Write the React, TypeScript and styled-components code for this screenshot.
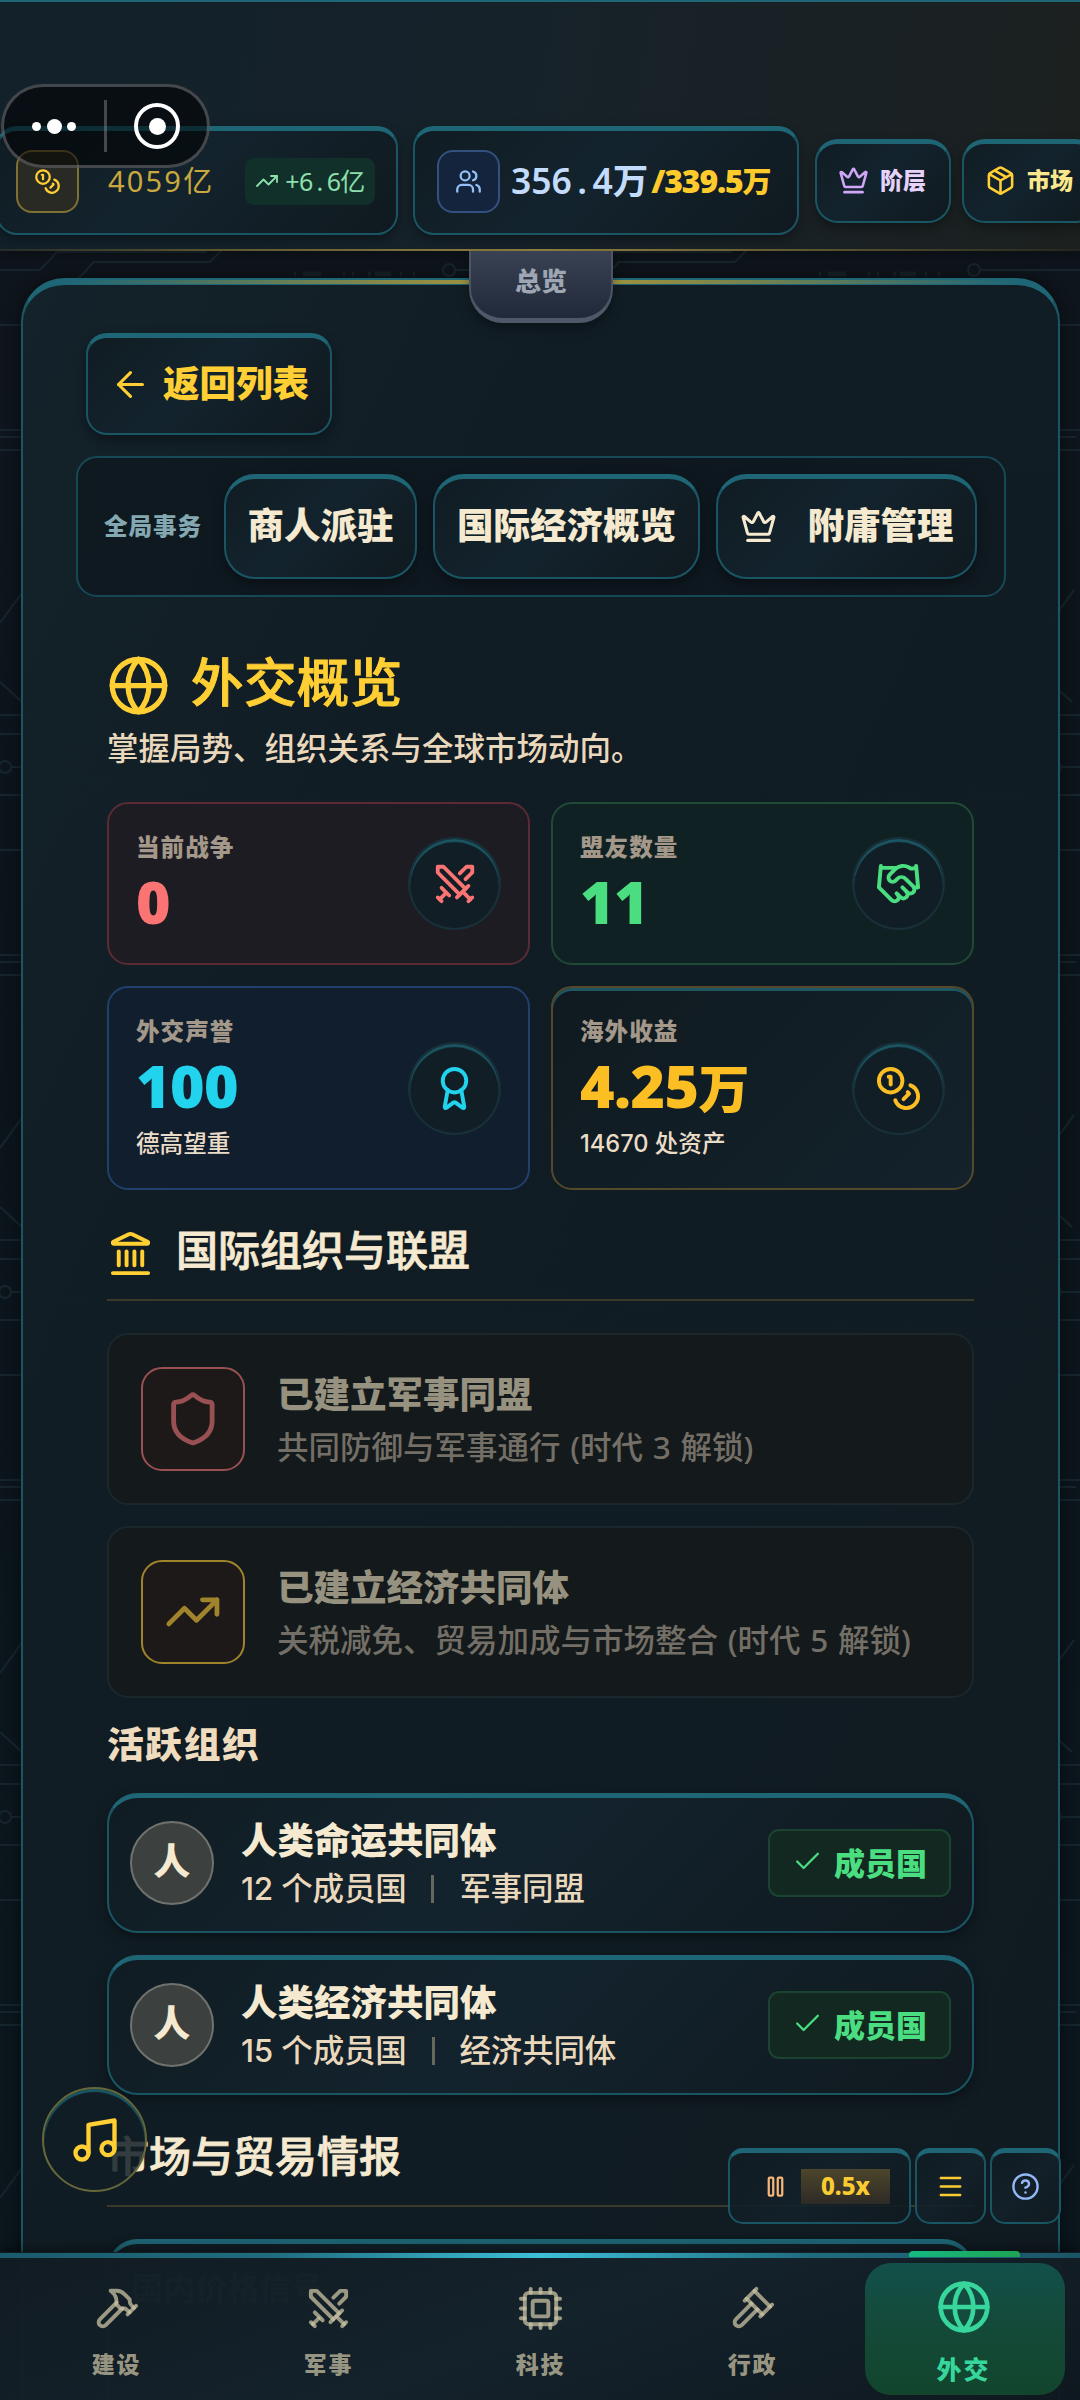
import React from 'react';
import styled, { createGlobalStyle, css } from 'styled-components';
import {
  ArrowLeft,
  Award,
  Check,
  CircleHelp,
  Cpu,
  Crown,
  Globe,
  Handshake,
  Landmark,
  Menu,
  Music,
  Package,
  Shield,
  Swords,
  TrendingUp,
  Users,
} from 'lucide-react';

const teal = '#1a5564';
const tealTop = '#1e6676';
const cream = '#f5ead0';
const gold = '#ffcf33';

const GlobalStyle = createGlobalStyle`
  * { box-sizing: border-box; }
  body { margin: 0; background: #0d141a; }
  svg { display: block; flex: none; }
`;

const Screen = styled.div`
  position: relative;
  width: 1080px;
  height: 2400px;
  overflow: hidden;
  display: flex;
  flex-direction: column;
  background: linear-gradient(180deg, #0f151c 0%, #0c141b 40%, #0b161d 100%);
  font-family: Inter, 'Noto Sans CJK SC', sans-serif;
  color: ${cream};
  white-space: nowrap;
`;

const Circuit = styled.svg`
  position: absolute;
  inset: 0;
`;

/* ---------- header ---------- */

const Header = styled.header`
  position: relative;
  z-index: 3;
  height: 251px;
  flex: none;
  overflow: hidden;
  border-top: 2px solid ${tealTop};
  background: linear-gradient(100deg, #12212a 0%, #16222a 45%, #1a2124 80%, #1c211f 100%);
  box-shadow: 0 4px 12px rgba(0, 0, 0, 0.3);
  &::after {
    content: '';
    position: absolute;
    left: 0;
    right: 0;
    bottom: 0;
    height: 2px;
    background: linear-gradient(90deg, #252c29 0%, #5c552e 20%, #938040 50%, #5c552e 75%, #23261f 100%);
  }
`;

const HeaderRow = styled.div`
  display: flex;
  align-items: center;
  margin: 124px 0 0 -4px;
  height: 109px;
`;

const frame = css`
  border: 2px solid ${teal};
  border-top: 5px solid ${tealTop};
  background: linear-gradient(135deg, #101c23 0%, #13232d 45%, #10191f 100%);
  box-shadow: 0 5px 12px rgba(0, 0, 0, 0.35);
`;

const Resource = styled.div<{ $w: number; $pad: number }>`
  ${frame}
  display: flex;
  align-items: center;
  flex: none;
  width: ${(p) => p.$w}px;
  height: 109px;
  padding: 0 0 2px ${(p) => p.$pad}px;
  border-radius: 21px;
  margin-right: 15px;
`;

const IconTile = styled.div<{ $line: string; $bg: string }>`
  display: grid;
  place-items: center;
  flex: none;
  width: 63px;
  height: 63px;
  border-radius: 16px;
  border: 2px solid ${(p) => p.$line};
  background: ${(p) => p.$bg};
`;

const Silver = styled.span`
  font: 400 29px/40px 'Noto Sans', 'Noto Sans CJK SC', sans-serif;
  letter-spacing: 2.2px;
  color: #c9a93d;
  width: 136px;
  padding-left: 29px;
  margin-right: 30px;
`;

const Delta = styled.span`
  display: flex;
  align-items: center;
  justify-content: center;
  gap: 6px;
  width: 130px;
  height: 47px;
  border-radius: 9px;
  background: #12302a;
  color: #8ce0ac;
  font: 400 25px/36px 'Noto Sans', 'Noto Sans CJK SC', sans-serif;
  letter-spacing: -0.6px;
`;

const Dot = styled.span<{ $w: number }>`
  display: inline-block;
  text-align: center;
  width: ${(p) => p.$w}px;
`;

const Population = styled.span`
  margin-left: 11px;
  font: 600 35.5px/48px 'Noto Sans', 'Noto Sans CJK SC', sans-serif;
  color: #c3dcfb;
  margin-top: -2px;
`;

const Capacity = styled.span`
  margin: 1px 0 0 3px;
  font: 900 32px/44px 'Noto Sans', 'Noto Sans CJK SC', sans-serif;
  letter-spacing: -1.2px;
  color: #ffca2c;
  small {
    font-size: 29px;
    font-weight: 900;
  }
`;

const HeaderButton = styled.button<{ $color: string }>`
  ${frame}
  display: flex;
  align-items: center;
  flex: none;
  gap: 11px;
  width: 136px;
  height: 84px;
  margin: 0 10px 0 1px;
  padding: 0 0 3px 21px;
  border-radius: 23px;
  font: 900 23px/32px Inter, 'Noto Sans CJK SC', sans-serif;
  color: ${(p) => p.$color};
`;

const Capsule = styled.div`
  position: absolute;
  z-index: 6;
  left: 1px;
  top: 84px;
  width: 209px;
  height: 84px;
  border-radius: 42px;
  border: 3px solid rgba(150, 150, 155, 0.42);
  background: rgba(0, 0, 0, 0.55);
  display: flex;
  align-items: center;
`;

const CapsuleHalf = styled.div`
  flex: 1;
  display: flex;
  align-items: center;
  justify-content: center;
  gap: 5.5px;
`;

const Ball = styled.i<{ $d: number }>`
  width: ${(p) => p.$d}px;
  height: ${(p) => p.$d}px;
  border-radius: 50%;
  background: #fff;
`;

const Ring = styled.div`
  display: grid;
  place-items: center;
  width: 46px;
  height: 46px;
  border: 4px solid #fff;
  border-radius: 50%;
`;

const CapsuleRule = styled.i`
  width: 3px;
  height: 52px;
  background: rgba(160, 160, 165, 0.4);
`;

/* ---------- panel ---------- */

const PullTab = styled.div`
  position: absolute;
  z-index: 4;
  left: 469px;
  top: 251px;
  width: 144px;
  height: 72px;
  border: 2px solid #4b5565;
  border-top: 0;
  border-bottom: 5px solid #4f5868;
  border-radius: 0 0 34px 34px;
  background: linear-gradient(180deg, #394253, #202839);
  box-shadow: 0 6px 12px rgba(0, 0, 0, 0.35);
  text-align: center;
  font-size: 26px;
  line-height: 62px;
  font-weight: 900;
  color: #9ea6b3;
`;

const Panel = styled.main`
  position: relative;
  flex: none;
  width: 1039px;
  height: 2200px;
  margin: 27px 0 0 21px;
  padding-top: 48px;
  border: 2px solid ${teal};
  border-top: 7px solid ${tealTop};
  border-radius: 44px 44px 0 0;
  background: linear-gradient(115deg, rgba(20, 35, 43, 0.95) 0%, rgba(17, 29, 37, 0.95) 30%, rgba(16, 27, 33, 0.95) 100%);
  box-shadow: 0 0 14px rgba(0, 0, 0, 0.5);
  &::before {
    content: '';
    position: absolute;
    left: 40px;
    right: 40px;
    top: -5px;
    height: 4px;
    background: linear-gradient(90deg, transparent, #8a8a45 35%, #b09a3c 50%, #8a8a45 65%, transparent);
  }
`;

const BackButton = styled.button`
  ${frame}
  display: flex;
  align-items: center;
  gap: 12px;
  width: 246px;
  height: 102px;
  margin-left: 63px;
  padding: 0 0 3px 22px;
  border-radius: 21px;
  font: 900 36.5px/50px Inter, 'Noto Sans CJK SC', sans-serif;
  color: ${gold};
`;

const ActionBar = styled.div`
  display: flex;
  align-items: center;
  gap: 16px;
  width: 930px;
  height: 141px;
  margin: 21px 0 0 53px;
  padding: 0 0 1px 26px;
  border: 2px solid #164956;
  border-radius: 21px;
  background: linear-gradient(100deg, #0f1920, #0e171f 60%, #101a21);
`;

const ActionLabel = styled.span`
  width: 104px;
  font-size: 23.6px;
  font-weight: 900;
  letter-spacing: 0.9px;
  margin-top: -3px;
  color: #84a8b2;
`;

const ActionButton = styled.button<{ $w: number }>`
  ${frame}
  display: flex;
  align-items: center;
  justify-content: center;
  gap: 31px;
  flex: none;
  width: ${(p) => p.$w}px;
  height: 105px;
  padding: 0 0 3px;
  border-radius: 31px;
  font: 900 36.5px/50px Inter, 'Noto Sans CJK SC', sans-serif;
  color: ${cream};
`;

const Content = styled.div`
  width: 867px;
  margin-left: 84px;
`;

const Title = styled.h1`
  display: flex;
  align-items: center;
  gap: 21px;
  height: 63px;
  margin: 57px 0 0;
  font-size: 52.5px;
  line-height: 63px;
  font-weight: 500;
  letter-spacing: 0.4px;
  -webkit-text-stroke: 0.9px currentColor;
  color: ${gold};
  span {
    margin-top: -4px;
  }
`;

const Subtitle = styled.p`
  margin: 11px 0 32px;
  font-size: 31.5px;
  line-height: 42px;
  font-weight: 500;
  color: #ead8bc;
`;

const Stats = styled.div`
  display: grid;
  grid-template-columns: 423px 423px;
  grid-template-rows: 163px 204px;
  gap: 21px;
`;

const StatCard = styled.section<{ $line: string; $bg: string; $lit?: boolean }>`
  display: flex;
  align-items: center;
  justify-content: space-between;
  padding: 0 27px;
  border: 2px solid ${(p) => p.$line};
  border-radius: 21px;
  background: ${(p) => p.$bg};
  ${(p) =>
    p.$lit &&
    css`
      box-shadow: inset 0 3px 0 #1d5764;
    `}
`;

const StatLabel = styled.div`
  font-size: 23.6px;
  line-height: 32px;
  font-weight: 900;
  letter-spacing: 1px;
  padding-top: 1px;
  height: 32px;
  color: #a39889;
`;

const StatValue = styled.div<{ $color: string }>`
  font: 900 59px/68px 'Noto Sans', 'Noto Sans CJK SC', sans-serif;
  letter-spacing: -0.6px;
  height: 73px;
  padding-top: 4px;
  color: ${(p) => p.$color};
  small {
    font-size: 51px;
    font-weight: 900;
  }
`;

const StatNote = styled.div`
  font-size: 23.6px;
  line-height: 32px;
  height: 41px;
  padding-top: 8px;
  font-weight: 500;
  color: #eadcc6;
`;

const StatIcon = styled.div<{ $color: string }>`
  display: grid;
  place-items: center;
  width: 93px;
  height: 93px;
  border-radius: 50%;
  border: 2px solid rgba(30, 60, 70, 0.6);
  background: #111e26;
  box-shadow: inset 0 3px 1px #1b5663;
  color: ${(p) => p.$color};
`;

const SectionHeading = styled.h2<{ $top: number }>`
  display: flex;
  align-items: center;
  gap: 22px;
  height: 74px;
  margin: ${(p) => p.$top}px 0 32px;
  padding-bottom: 25px;
  border-bottom: 2px solid #3a3a2c;
  font-size: 42px;
  line-height: 47px;
  font-weight: 500;
  color: ${cream};
  span {
    -webkit-text-stroke: 0.8px currentColor;
  }
  svg {
    color: ${gold};
    margin-top: 6px;
  }
`;

const OrgCard = styled.section`
  display: flex;
  align-items: center;
  gap: 32px;
  height: 172px;
  margin-bottom: 21px;
  padding: 0 32px;
  border: 2px solid #1c272b;
  border-radius: 21px;
  background: #14191c;
`;

const OrgIcon = styled.div<{ $color: string }>`
  display: grid;
  place-items: center;
  flex: none;
  width: 104px;
  height: 104px;
  border: 2px solid ${(p) => p.$color};
  border-radius: 21px;
  background: #1c1918;
  color: ${(p) => p.$color};
`;

const OrgName = styled.div`
  font-size: 36.5px;
  line-height: 52px;
  font-weight: 900;
  color: #96927f;
`;

const OrgNote = styled.div`
  font: 500 31.5px/46px 'Noto Sans', 'Noto Sans CJK SC', sans-serif;
  word-spacing: 1.5px;
  padding-top: 3px;
  color: #736f66;
`;

const ListTitle = styled.h3`
  margin: 0 0 22px;
  font-size: 36.75px;
  line-height: 52px;
  font-weight: 900;
  letter-spacing: 1.6px;
  color: #efdcbf;
`;

const Member = styled.section`
  ${frame}
  display: flex;
  align-items: center;
  height: 140px;
  margin-bottom: 22px;
  padding: 0 21px 3px;
  border-radius: 31px;
`;

const Avatar = styled.div`
  width: 84px;
  height: 84px;
  border: 2px solid #70726d;
  border-radius: 50%;
  background: #3c4140;
  text-align: center;
  font-size: 36.75px;
  line-height: 78px;
  font-weight: 900;
`;

const MemberText = styled.div`
  flex: 1;
  padding: 1px 0 0 27px;
`;

const MemberName = styled.div`
  font-size: 36.5px;
  line-height: 50px;
  font-weight: 900;
  color: ${cream};
`;

const MemberNote = styled.div`
  display: flex;
  align-items: center;
  font-size: 31.5px;
  line-height: 45px;
  font-weight: 500;
  letter-spacing: -0.2px;
  color: #ead8bc;
  i {
    width: 3px;
    height: 28px;
    margin: 0 25px;
    background: #66675f;
  }
`;

const Badge = styled.div`
  display: flex;
  align-items: center;
  gap: 11px;
  width: 183px;
  height: 68px;
  padding: 0 0 3px 22px;
  border: 2px solid #1a4430;
  border-radius: 11px;
  background: #122821;
  color: #4ade80;
  font-size: 31px;
  font-weight: 900;
`;

const Market = styled.section`
  ${frame}
  height: 200px;
  border-radius: 31px;
  padding: 19px 22px;
  font-size: 32px;
  font-weight: 700;
  color: #6b7b80;
`;

/* ---------- floating controls ---------- */

const MusicButton = styled.button`
  position: absolute;
  z-index: 5;
  left: 42px;
  top: 2087px;
  width: 105px;
  height: 105px;
  display: grid;
  place-items: center;
  padding: 0;
  border: 2px solid #66683a;
  border-radius: 50%;
  background: rgba(16, 29, 38, 0.85);
  box-shadow: inset 0 3px 1px #1b5663;
  color: ${gold};
`;

const Controls = styled.div`
  position: absolute;
  z-index: 5;
  left: 728px;
  top: 2148px;
  display: flex;
  gap: 4px;
`;

const Control = styled.div<{ $w: number; $color: string }>`
  display: flex;
  align-items: center;
  justify-content: center;
  gap: 12px;
  width: ${(p) => p.$w}px;
  height: 76px;
  padding-bottom: 3px;
  border: 2px solid ${teal};
  border-top: 5px solid ${tealTop};
  border-radius: 15px;
  background: linear-gradient(135deg, rgba(16, 27, 34, 0.9), rgba(19, 33, 42, 0.9) 50%, rgba(16, 25, 31, 0.9));
  color: ${(p) => p.$color};
`;

const SpeedControl = styled(Control)`
  justify-content: flex-start;
  padding-left: 32px;
`;

const Speed = styled.span`
  width: 89px;
  height: 35px;
  background: linear-gradient(180deg, #4c452b, #2e2b26);
  text-align: center;
  font: 800 24px/34px 'Noto Sans', sans-serif;
  color: #fbcc32;
`;

const Nav = styled.nav`
  position: absolute;
  z-index: 4;
  left: 0;
  right: 0;
  bottom: 0;
  height: 148px;
  padding: 0 10px;
  display: grid;
  grid-template-columns: repeat(5, 212px);
  background: linear-gradient(160deg, rgba(17, 27, 34, 0.97) 0%, rgba(20, 34, 43, 0.97) 50%, rgba(15, 24, 31, 0.97) 100%);
  box-shadow: 0 -4px 12px rgba(0, 0, 0, 0.4);
  &::before {
    content: '';
    position: absolute;
    left: 0;
    right: 0;
    top: 1px;
    height: 5px;
    background: linear-gradient(90deg, #1a5b6d 0%, #1f6c7e 25%, #3cc0d8 50%, #1f6c7e 75%, #1a5567 100%);
  }
`;

const NavItem = styled.button`
  display: flex;
  flex-direction: column;
  align-items: center;
  gap: 17px;
  border: 0;
  background: none;
  padding: 33px 0 0 1px;
  font: 900 23px/32px Inter, 'Noto Sans CJK SC', sans-serif;
  letter-spacing: 1.8px;
  color: rgba(204, 196, 165, 0.74);
`;

const NavActive = styled(NavItem)`
  position: relative;
  justify-self: center;
  width: 200px;
  height: 132px;
  margin: 11px -1px 0 0;
  padding: 16px 2px 0 0;
  gap: 19px;
  border-radius: 26px;
  background: linear-gradient(180deg, #12504a, #144a3a 45%, #12452c);
  font-size: 25px;
  letter-spacing: 2px;
  color: #37d69c;
  &::before {
    content: '';
    position: absolute;
    left: 44px;
    top: -12px;
    width: 111px;
    height: 6px;
    border-radius: 4px 4px 0 0;
    background: linear-gradient(90deg, #14b981, #1fa453);
  }
`;

/* ---------- icons ---------- */

const Stroke = ({ size, children }: { size: number; children: React.ReactNode }) => (
  <svg
    width={size}
    height={size}
    viewBox="0 0 24 24"
    fill="none"
    stroke="currentColor"
    strokeWidth={2}
    strokeLinecap="round"
    strokeLinejoin="round"
  >
    {children}
  </svg>
);

const Coins = ({ size }: { size: number }) => (
  <Stroke size={size}>
    <circle cx="8" cy="8" r="6" />
    <path d="M18.09 10.37A6 6 0 1 1 10.34 18" />
    <path d="M7 6h1v4" />
    <path d="m16.71 13.88.7.71-2.82 2.82" />
  </Stroke>
);

const Hammer = () => (
  <Stroke size={47}>
    <path d="m15 12-8.5 8.5a2.12 2.12 0 1 1-3-3L12 9" />
    <path d="M17.64 15 22 10.64" />
    <path d="m20.91 11.7-1.25-1.25c-.6-.6-.93-1.4-.93-2.25v-.86L16.01 4.6a5.56 5.56 0 0 0-3.94-1.64H9l.92.82A6.18 6.18 0 0 1 12 8.4v1.56l2 2h2.47l2.26 1.91" />
  </Stroke>
);

const Gavel = () => (
  <Stroke size={47}>
    <path d="m14.5 12.5-8 8a2.12 2.12 0 1 1-3-3l8-8" />
    <path d="m16 16 6-6" />
    <path d="m8 8 6-6" />
    <path d="m9 7 8 8" />
    <path d="m21 11-8-8" />
  </Stroke>
);

const PauseIcon = () => (
  <Stroke size={27}>
    <rect x="6" y="4" width="4" height="16" rx="1" />
    <rect x="14" y="4" width="4" height="16" rx="1" />
  </Stroke>
);

const Background = () => (
  <Circuit width="1080" height="2400" fill="none">
    <defs>
      <pattern id="circuit" width="525" height="525" patternUnits="userSpaceOnUse">
        <g stroke="#16252b" strokeWidth="2" fill="none">
          <path d="M0 157 22 177M0 190h40M0 209h30M11 242h30M0 325h34M0 430h32M0 437h26M0 450h40M24 65 0 98" />
          <circle cx="5" cy="242" r="6" />
          <path d="M0 270h40l17-18h150M78 279l16-17h116l12-12M456 270h69" />
          <circle cx="449" cy="270" r="6" />
        </g>
        <path d="M294 274h2M303 274h18M343 274h2M352 274h2M368 274h3M375 274h16M400 274h2M413 274h2" stroke="#162126" strokeWidth="5" />
      </pattern>
    </defs>
    <rect width="1080" height="2400" fill="url(#circuit)" />
  </Circuit>
);

/* ---------- data ---------- */

const orgs = [
  { name: '已建立军事同盟', note: '共同防御与军事通行 (时代 3 解锁)', color: '#985052', icon: <Shield size={57.75} /> },
  { name: '已建立经济共同体', note: '关税减免、贸易加成与市场整合 (时代 5 解锁)', color: '#a0842c', icon: <TrendingUp size={57.75} /> },
];

const members = [
  { name: '人类命运共同体', count: '12 个成员国', kind: '军事同盟' },
  { name: '人类经济共同体', count: '15 个成员国', kind: '经济共同体' },
];

export default function App() {
  return (
    <Screen>
      <GlobalStyle />
      <Background />

      <Header>
        <HeaderRow>
          <Resource $w={402} $pad={18}>
            <IconTile $line="#7f7033" $bg="#2a2a25">
              <span style={{ color: gold }}>
                <Coins size={27} />
              </span>
            </IconTile>
            <Silver>4059亿</Silver>
            <Delta>
              <TrendingUp size={24} strokeWidth={1.8} />
              <span>
                +6<Dot $w={14}>.</Dot>6亿
              </span>
            </Delta>
          </Resource>
          <Resource $w={386} $pad={22}>
            <IconTile $line="#33507f" $bg="#14243c">
              <Users size={27} color="#93c1f7" />
            </IconTile>
            <Population>
              356<Dot $w={20.6}>.</Dot>4万
            </Population>
            <Capacity>
              /339.5<small>万</small>
            </Capacity>
          </Resource>
          <HeaderButton $color="#e6d3fb">
            <Crown size={31} color="#cfa6f8" />
            阶层
          </HeaderButton>
          <HeaderButton $color="#fae98c">
            <Package size={31} color={gold} />
            市场
          </HeaderButton>
        </HeaderRow>
      </Header>

      <Capsule>
        <CapsuleHalf>
          <Ball $d={9} />
          <Ball $d={15} />
          <Ball $d={9} />
        </CapsuleHalf>
        <CapsuleRule />
        <CapsuleHalf>
          <Ring>
            <Ball $d={17} />
          </Ring>
        </CapsuleHalf>
      </Capsule>

      <PullTab>总览</PullTab>

      <Panel>
        <BackButton>
          <ArrowLeft size={41} strokeWidth={1.8} />
          返回列表
        </BackButton>

        <ActionBar>
          <ActionLabel>全局事务</ActionLabel>
          <ActionButton $w={193}>商人派驻</ActionButton>
          <ActionButton $w={267}>国际经济概览</ActionButton>
          <ActionButton $w={261}>
            <Crown size={37} />
            附庸管理
          </ActionButton>
        </ActionBar>

        <Content>
          <Title>
            <Globe size={63} />
            <span>外交概览</span>
          </Title>
          <Subtitle>掌握局势、组织关系与全球市场动向。</Subtitle>

          <Stats>
            <StatCard $line="#5a2b34" $bg="#1d1c23">
              <div>
                <StatLabel>当前战争</StatLabel>
                <StatValue $color="#fb7474">0</StatValue>
              </div>
              <StatIcon $color="#fb7474">
                <Swords size={46} />
              </StatIcon>
            </StatCard>
            <StatCard $line="#1e4a36" $bg="#102123">
              <div>
                <StatLabel>盟友数量</StatLabel>
                <StatValue $color="#4ade80">11</StatValue>
              </div>
              <StatIcon $color="#4ade80">
                <Handshake size={47} />
              </StatIcon>
            </StatCard>
            <StatCard $line="#21406e" $bg="#111e2e">
              <div>
                <StatLabel>外交声誉</StatLabel>
                <StatValue $color="#22d3ee">100</StatValue>
                <StatNote>德高望重</StatNote>
              </div>
              <StatIcon $color="#22d3ee">
                <Award size={47} />
              </StatIcon>
            </StatCard>
            <StatCard $line="#54492b" $bg="linear-gradient(135deg, #101a20, #13222b)" $lit>
              <div>
                <StatLabel>海外收益</StatLabel>
                <StatValue $color="#fbbf24">
                  4.25<small>万</small>
                </StatValue>
                <StatNote>14670 处资产</StatNote>
              </div>
              <StatIcon $color="#fbbf24">
                <Coins size={47} />
              </StatIcon>
            </StatCard>
          </Stats>

          <SectionHeading $top={37}>
            <Landmark size={47} />
            <span>国际组织与联盟</span>
          </SectionHeading>

          {orgs.map((o) => (
            <OrgCard key={o.name}>
              <OrgIcon $color={o.color}>{o.icon}</OrgIcon>
              <div>
                <OrgName>{o.name}</OrgName>
                <OrgNote>{o.note}</OrgNote>
              </div>
            </OrgCard>
          ))}

          <ListTitle>活跃组织</ListTitle>

          {members.map((m) => (
            <Member key={m.name}>
              <Avatar>人</Avatar>
              <MemberText>
                <MemberName>{m.name}</MemberName>
                <MemberNote>
                  {m.count}
                  <i />
                  {m.kind}
                </MemberNote>
              </MemberText>
              <Badge>
                <Check size={31} strokeWidth={1.8} />
                成员国
              </Badge>
            </Member>
          ))}

          <SectionHeading $top={38}>
            <span>市场与贸易情报</span>
          </SectionHeading>
          <Market>国内价格信号</Market>
        </Content>
      </Panel>

      <MusicButton>
        <Music size={52} />
      </MusicButton>

      <Controls>
        <SpeedControl $w={183} $color="#f5b679">
          <PauseIcon />
          <Speed>0.5x</Speed>
        </SpeedControl>
        <Control $w={71} $color="#fbcc32">
          <Menu size={29} />
        </Control>
        <Control $w={71} $color="#93b8f5">
          <CircleHelp size={29} />
        </Control>
      </Controls>

      <Nav>
        <NavItem>
          <Hammer />
          建设
        </NavItem>
        <NavItem>
          <Swords size={47} />
          军事
        </NavItem>
        <NavItem>
          <Cpu size={47} />
          科技
        </NavItem>
        <NavItem>
          <Gavel />
          行政
        </NavItem>
        <NavActive>
          <Globe size={56} />
          外交
        </NavActive>
      </Nav>
    </Screen>
  );
}
